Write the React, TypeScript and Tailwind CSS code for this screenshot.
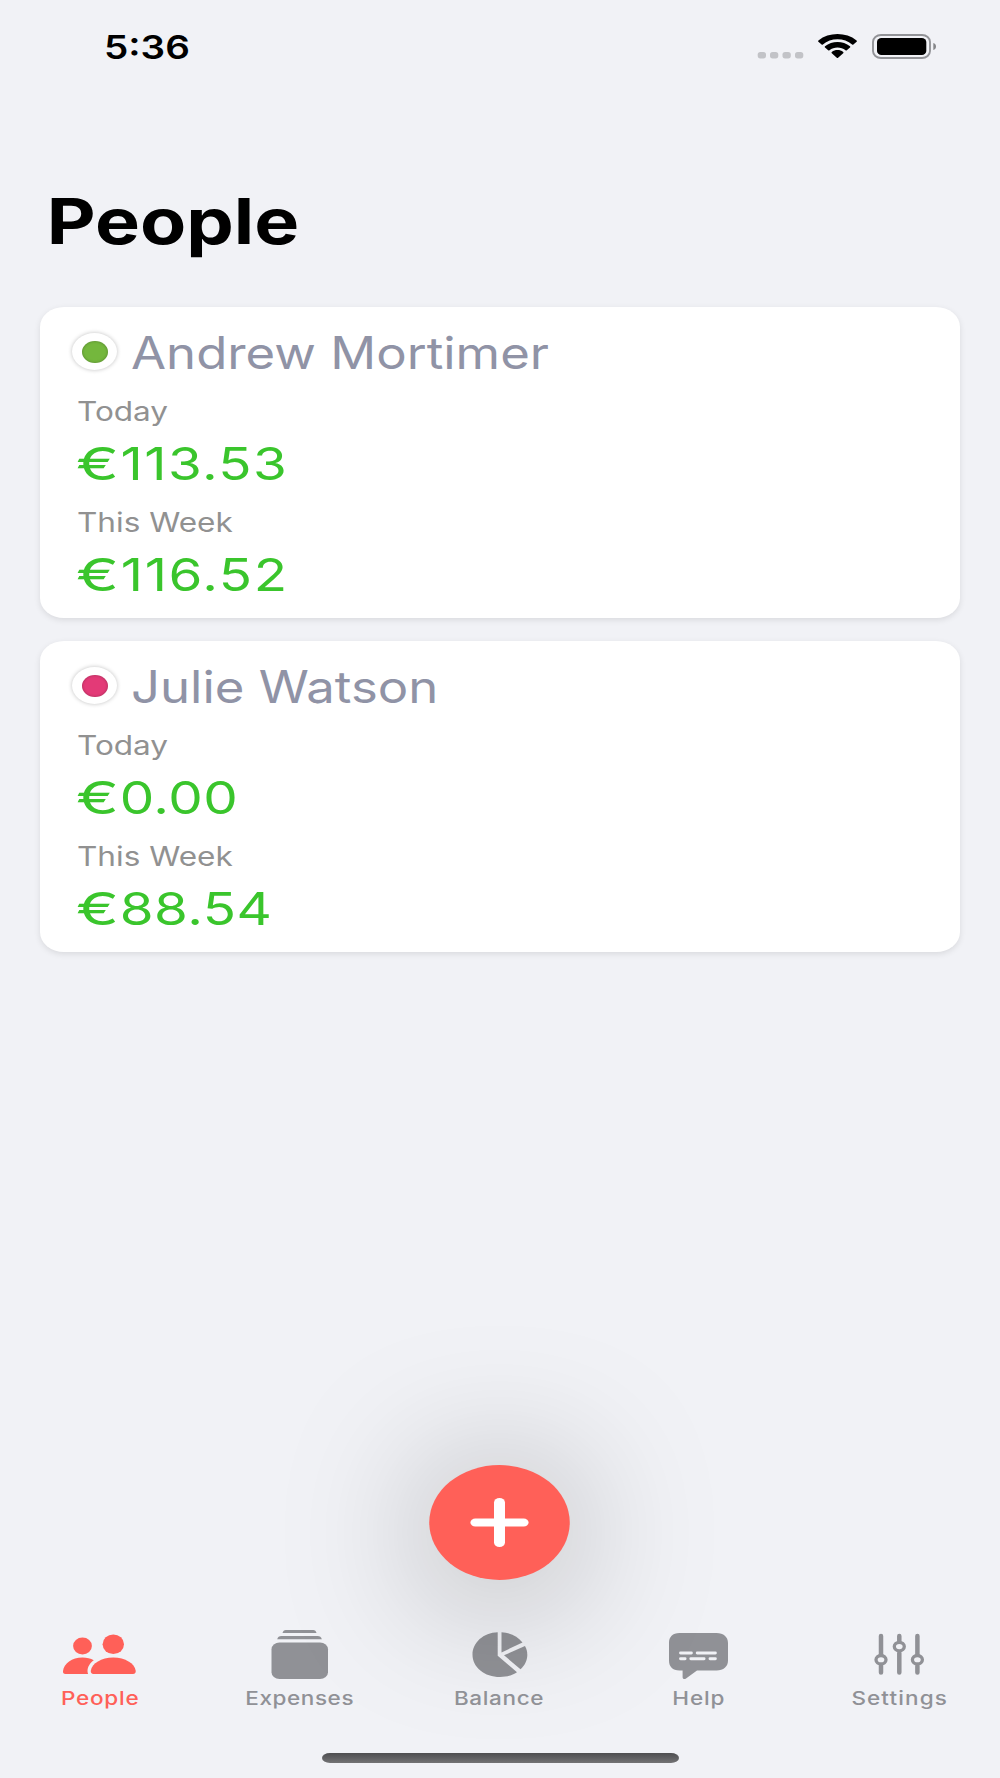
import type { ReactNode } from "react";

type Person = {
  name: string;
  nameClass: string;
  dot: string;
  today: string;
  todayClass: string;
  week: string;
  weekClass: string;
};

const people: Person[] = [
  {
    name: "Andrew Mortimer",
    nameClass: "scale-x-[1.143]",
    dot: "bg-[#74b73d]",
    today: "113.53",
    todayClass: "tracking-[1.15px]",
    week: "116.52",
    weekClass: "tracking-[1.3px]",
  },
  {
    name: "Julie Watson",
    nameClass: "scale-x-[1.143]",
    dot: "bg-[#e33a77]",
    today: "0.00",
    todayClass: "tracking-[0.4px]",
    week: "88.54",
    weekClass: "tracking-[0.4px]",
  },
];

function PeopleIcon() {
  return (
    <g>
      <ellipse cx="22.5" cy="20" rx="9.4" ry="8.4" />
      <ellipse cx="53.3" cy="18.2" rx="10.7" ry="9.8" />
      <path d="M5.5 48c-1.9 0-2.7-1.1-2.5-3 .9-7.2 8.8-13.4 19.5-13.4 4.3 0 8.2 1 11.3 2.7-3.9 2.7-6.3 6.8-6.3 10.7 0 1.1.2 2.1.6 3z" />
      <path d="M33.5 48c-2 0-3-1.2-2.7-3.2 1.1-7.2 10.5-13.2 22.5-13.2s21.3 6 22.4 13.2c.3 2-.7 3.2-2.7 3.2z" />
    </g>
  );
}

function ExpensesIcon() {
  return (
    <g>
      <path d="M22.5 7c.5-2 1.6-3 3.2-3h27.6c1.6 0 2.7 1 3.2 3z" />
      <path d="M17.2 13.2c.6-2.1 2-3.2 4.1-3.2h36.4c2.1 0 3.5 1.1 4.1 3.2z" />
      <rect x="11.5" y="16.5" width="56.5" height="36.5" rx="8" ry="6.8" />
    </g>
  );
}

function BalanceIcon() {
  return (
    <g>
      <path d="M37.7 6.2C23.3 6.7 12.5 16.5 12.5 28.7 12.5 41.2 24.5 51 40 51c6.6 0 12.3-1.6 17-4.8L37.7 29.7z" />
      <path d="M41.5 6.2c9 .4 16.3 4.2 21 10.4L41.5 26.4z" />
      <path d="M65 20c1.6 3 2.3 5.7 2.3 8.7 0 5.6-2.4 10.5-6.8 14.5L44 29.3z" />
    </g>
  );
}

function HelpIcon() {
  return (
    <g transform="translate(-1 0)">
      <path d="M20.5 7h37C64.5 7 69 10.9 69 17v17.5c0 6.1-4.5 10-11.5 10H38L27 52.4c-1.7 1.2-3.4.5-3.4-1.5v-6.4h-3.1C13.5 44.5 10 40.6 10 34.5V17C10 10.9 13.5 7 20.5 7z" />
      <g stroke="#f1f2f6" strokeWidth="2.9" strokeLinecap="round">
        <path d="M21.5 27h10.9M38.2 27h18.2M21.5 32.7h4.6M31.8 32.7h13.3M51 32.7h5.4" />
      </g>
    </g>
  );
}

function SettingsIcon() {
  return (
    <g fill="none" stroke="currentColor" strokeLinecap="round" transform="translate(-1 0)">
      <path
        strokeWidth="4.5"
        d="M22 10v18.500M22 40v6.500M40.300 10v5.500M40.300 27v19.500M58.400 10v18.500M58.400 40v6.500"
      />
      <g strokeWidth="3.3">
        <ellipse cx="22" cy="33.7" rx="5" ry="4.2" />
        <ellipse cx="40.3" cy="20.6" rx="5" ry="4.2" />
        <ellipse cx="58.4" cy="33.7" rx="5" ry="4.2" />
      </g>
    </g>
  );
}

const tabs: { label: string; icon: ReactNode; active?: boolean; labelClass: string }[] = [
  { label: "People", icon: <PeopleIcon />, active: true, labelClass: "tracking-[0.6px]" },
  { label: "Expenses", icon: <ExpensesIcon />, labelClass: "tracking-[0.46px]" },
  { label: "Balance", icon: <BalanceIcon />, labelClass: "mr-px tracking-[0.52px]" },
  { label: "Help", icon: <HelpIcon />, labelClass: "mr-0.5 tracking-[0.73px]" },
  { label: "Settings", icon: <SettingsIcon />, labelClass: "tracking-[0.9px]" },
];

function StatusBar() {
  return (
    <header className="flex h-[94px] items-center justify-between pr-[63px] pl-[103.5px]">
      <span className="origin-left scale-x-[1.17] text-[33px] font-semibold leading-none">5:36</span>
      <svg width="180" height="30" viewBox="757 32 180 30" fill="none">
        <g fill="#c2c3c7">
          <rect x="757.7" y="52" width="8.3" height="6.4" rx="2.6" />
          <rect x="770" y="52" width="8.3" height="6.4" rx="2.6" />
          <rect x="782.5" y="52" width="8.3" height="6.4" rx="2.6" />
          <rect x="795" y="52" width="8.3" height="6.4" rx="2.6" />
        </g>
        <g fill="#000">
          <path d="M837.5 39.2c5.5 0 10.7 1.9 14.6 5.2.4.4.9.4 1.3 0l3.2-2.7c.5-.4.5-.9 0-1.3-10.7-8.4-27.5-8.4-38.2 0-.5.4-.5.9 0 1.3l3.2 2.7c.4.4.9.4 1.3 0 3.9-3.3 9.1-5.2 14.6-5.2z" />
          <path d="M837.5 47.6c3 0 5.8.9 8 2.7.4.4.9.4 1.3 0l3.2-2.7c.5-.4.5-.9 0-1.3-7-5.8-18-5.8-25 0-.5.4-.5.9 0 1.3l3.2 2.7c.4.4.9.4 1.3 0 2.2-1.8 5-2.7 8-2.7z" />
          <path d="M843.2 53.3c.5-.4.5-.9 0-1.3-3.2-2.6-8.2-2.6-11.4 0-.5.4-.5.9 0 1.3l5 4.5c.4.4.9.4 1.3 0z" />
        </g>
        <rect x="873" y="35" width="57" height="23" rx="8" ry="7" stroke="#929397" strokeWidth="1.9" />
        <rect x="877" y="38" width="49.3" height="17" rx="4.5" ry="4" fill="#000" />
        <path d="M933.3 43c1.7.5 2.7 1.8 2.7 3.5s-1 3-2.7 3.5z" fill="#858689" />
      </svg>
    </header>
  );
}

function Amount({ label, value, valueClass }: { label: string; value: string; valueClass: string }) {
  return (
    <div className="flex flex-col items-start pl-[37px]">
      <span className="origin-left scale-x-[1.19] text-[26.5px] leading-[44px] text-[#919191]">{label}</span>
      <span
        className={`-ml-px origin-left scale-x-[1.217] text-[45px] leading-[62px] text-[#3ac52c] ${valueClass}`}
      >
        <span className="mr-[5.5px] inline-block origin-left scale-x-[1.18]">€</span>
        {value}
      </span>
    </div>
  );
}

function PersonCard({ person }: { person: Person }) {
  return (
    <li className="h-[310.5px] rounded-[24px/20px] bg-white pt-4 shadow-[0_2px_6px_rgba(0,0,0,0.1)]">
      <div className="flex h-[57px] items-center pl-8">
        <span className="flex h-[37px] w-[45px] items-center justify-center rounded-[50%] bg-white shadow-[0_0_4px_rgba(0,0,0,0.25)]">
          <span
            className={`h-[22px] w-[26px] rounded-[50%] shadow-[inset_0_0_3px_rgba(0,0,0,0.3)] ${person.dot}`}
          />
        </span>
        <span
          className={`ml-[14px] origin-left whitespace-nowrap pt-[4px] text-[44.5px] leading-none text-[#9093a6] ${person.nameClass}`}
        >
          {person.name}
        </span>
      </div>
      <div className="mt-[9px] flex flex-col gap-[4.5px]">
        <Amount label="Today" value={person.today} valueClass={person.todayClass} />
        <Amount label="This Week" value={person.week} valueClass={person.weekClass} />
      </div>
    </li>
  );
}

export default function App() {
  return (
    <div className="flex h-[1778px] w-[1000px] flex-col overflow-hidden bg-[#f1f2f6] font-[Inter,'Liberation_Sans',sans-serif]">
      <StatusBar />

      <main className="flex grow flex-col">
        <h1 className="mt-[87px] origin-left scale-x-[1.198] pl-[39px] text-[63px] font-bold leading-[80px]">
          People
        </h1>
        <ul className="mt-[46px] flex flex-col gap-[23.5px] px-10">
          {people.map((p) => (
            <PersonCard key={p.name} person={p} />
          ))}
        </ul>
      </main>

      <button
        aria-label="Add"
        className="mr-px flex size-[115px] scale-x-[1.222] items-center justify-center self-center rounded-full bg-[#ff6058] shadow-[0_10px_135px_rgba(0,0,0,0.36)]"
      >
        <svg width="49" height="49" viewBox="0 0 49 49" stroke="#fff" strokeLinecap="round">
          <path strokeWidth="8" d="M4.7 24.5h39.6" />
          <path strokeWidth="9" d="M24.5 4.5v40" />
        </svg>
      </button>

      <nav className="mt-[46px] flex">
        {tabs.map((tab) => (
          <button
            key={tab.label}
            className={`flex w-[200px] flex-col items-center ${tab.active ? "text-[#ff6058]" : "text-[#909196]"}`}
          >
            <svg width="80" height="56" viewBox="0 0 80 56" fill="currentColor">
              {tab.icon}
            </svg>
            <span className={`scale-x-[1.217] text-[18.5px] font-medium leading-8 ${tab.labelClass}`}>
              {tab.label}
            </span>
          </button>
        ))}
      </nav>

      <div className="mt-[38.5px] mb-[15.5px] h-[10px] w-[357px] self-center rounded-[8px/5px] bg-linear-to-b from-[#4e4e50] to-[#737375]" />
    </div>
  );
}
